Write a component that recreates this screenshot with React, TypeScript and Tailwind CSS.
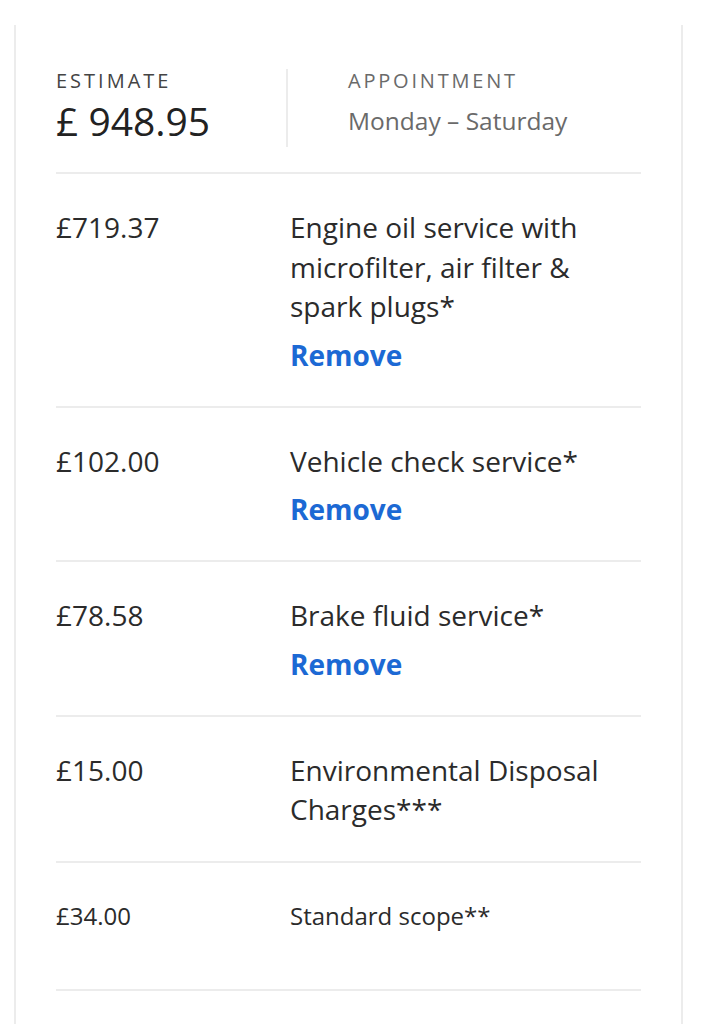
const items = [
  { price: "£719.37", label: "Engine oil service with microfilter, air filter & spark plugs*", removable: true },
  { price: "£102.00", label: "Vehicle check service*", removable: true },
  { price: "£78.58", label: "Brake fluid service*", removable: true },
  { price: "£15.00", label: "Environmental Disposal Charges***", removable: false },
];

function Row({ price, label, removable }: { price: string; label: string; removable: boolean }) {
  return (
    <div className="grid grid-cols-[234px_1fr] border-b-2 border-[#ececec] pt-[34px] pb-[31px] text-[28px] leading-[39.5px] text-[#2b2b2b]">
      <div>{price}</div>
      <div>
        <div className="pr-6">{label}</div>
        {removable && (
          <button type="button" className="mt-[8px] block font-bold leading-[40px] text-[#1c69d4]">
            Remove
          </button>
        )}
      </div>
    </div>
  );
}

export default function App() {
  return (
    <div className="min-h-[1024px] bg-white pt-[25px] pl-[14px]" style={{ fontFamily: "'Open Sans', 'Noto Sans', sans-serif" }}>
      <div className="w-[669px] min-h-[999px] border-x-2 border-[#ececec] px-[40px]">
        <div className="flex items-start border-b-2 border-[#ececec] pt-[44px] pb-[25px]">
          <div className="w-[232px] border-r-2 border-[#ececec]">
            <div className="text-[20px] leading-[24px] tracking-[0.15em] text-[#444]">ESTIMATE</div>
            <div className="mt-[2px] text-[39px] leading-[52px] text-[#222]">£ 948.95</div>
          </div>
          <div className="pl-[60px]">
            <div className="text-[20px] leading-[24px] tracking-[0.14em] text-[#6a6a6a]">APPOINTMENT</div>
            <div className="mt-[13px] text-[24.5px] leading-[30px] text-[#6a6a6a]">Monday – Saturday</div>
          </div>
        </div>
        {items.map((it) => (
          <Row key={it.price} {...it} />
        ))}
        <div className="grid grid-cols-[234px_1fr] border-b-2 border-[#ececec] pt-[38px] pb-[58px] text-[24px] leading-[30px] text-[#2b2b2b]">
          <div>£34.00</div>
          <div>Standard scope**</div>
        </div>
      </div>
    </div>
  );
}
